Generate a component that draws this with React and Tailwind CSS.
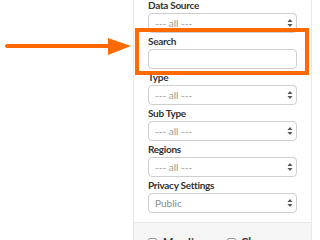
import React from 'react';

const font = { fontFamily: 'Lato, "Noto Sans", sans-serif' };

const Arrows = () => (
  <svg width="6" height="10" viewBox="0 0 6 10" className="shrink-0">
    <path d="M3 1 L5.5 4 L0.5 4 Z" fill="#555" />
    <path d="M3 9 L5.5 6 L0.5 6 Z" fill="#555" />
  </svg>
);

const Field = ({ label, value, input }) => (
  <div className="flex flex-col">
    <label className="h-[16px] leading-[16px] text-[10px] tracking-[-0.3px] font-bold text-[#333]">{label}</label>
    {input ? (
      <div className="h-[20px] rounded-[4px] border border-[#cfcfcf] bg-white"></div>
    ) : (
      <div className="h-[20px] rounded-[4px] border border-[#cfcfcf] bg-white flex items-center justify-between pl-[6px] pr-[3px]">
        <span className={`text-[10px] ${value === 'Public' ? 'text-[#888]' : 'text-[#9a9a9a]'}`}>{value}</span>
        <Arrows />
      </div>
    )}
  </div>
);

export default function App() {
  return (
    <div className="relative w-[320px] h-[240px] overflow-hidden bg-white flex" style={font}>
      <div className="w-[133px] shrink-0"></div>
      <div className="w-[179px] shrink-0 h-full border-x border-[#e8e8e8] flex flex-col">
        <div className="-mt-[3px] px-[14px] pb-[9px] flex flex-col">
          <Field label="Data Source" value="--- all ---" />
          <Field label="Search" input />
          <Field label="Type" value="--- all ---" />
          <Field label="Sub Type" value="--- all ---" />
          <Field label="Regions" value="--- all ---" />
          <Field label="Privacy Settings" value="Public" />
        </div>
        <div className="flex-1 bg-[#f5f5f5] border-t border-[#e6e6e6] px-[14px] pt-[13px] flex gap-[8px]">
          <div className="flex items-start gap-[6px] w-[71px]">
            <span className="mt-[2px] w-[9px] h-[9px] border border-[#999] rounded-[2px] bg-white"></span>
            <span className="text-[11px] leading-[12px] font-bold text-[#333]">Map It</span>
          </div>
          <div className="flex items-start gap-[5px]">
            <span className="mt-[2px] w-[9px] h-[9px] border border-[#999] rounded-[2px] bg-white"></span>
            <span className="text-[11px] leading-[12px] font-bold text-[#333]">Clear</span>
          </div>
        </div>
      </div>
      <div className="absolute left-[135px] top-[28px] w-[174px] h-[47px] border-4 border-[#ff6a00]"></div>
      <svg className="absolute left-0 top-[36px]" width="133" height="22" viewBox="0 36 133 22">
        <line x1="7" y1="46" x2="112" y2="46" stroke="#ff6a00" strokeWidth="4" strokeLinecap="round" />
        <path d="M108 38 L131 46 L108 55 Z" fill="#ff6a00" />
      </svg>
    </div>
  );
}
